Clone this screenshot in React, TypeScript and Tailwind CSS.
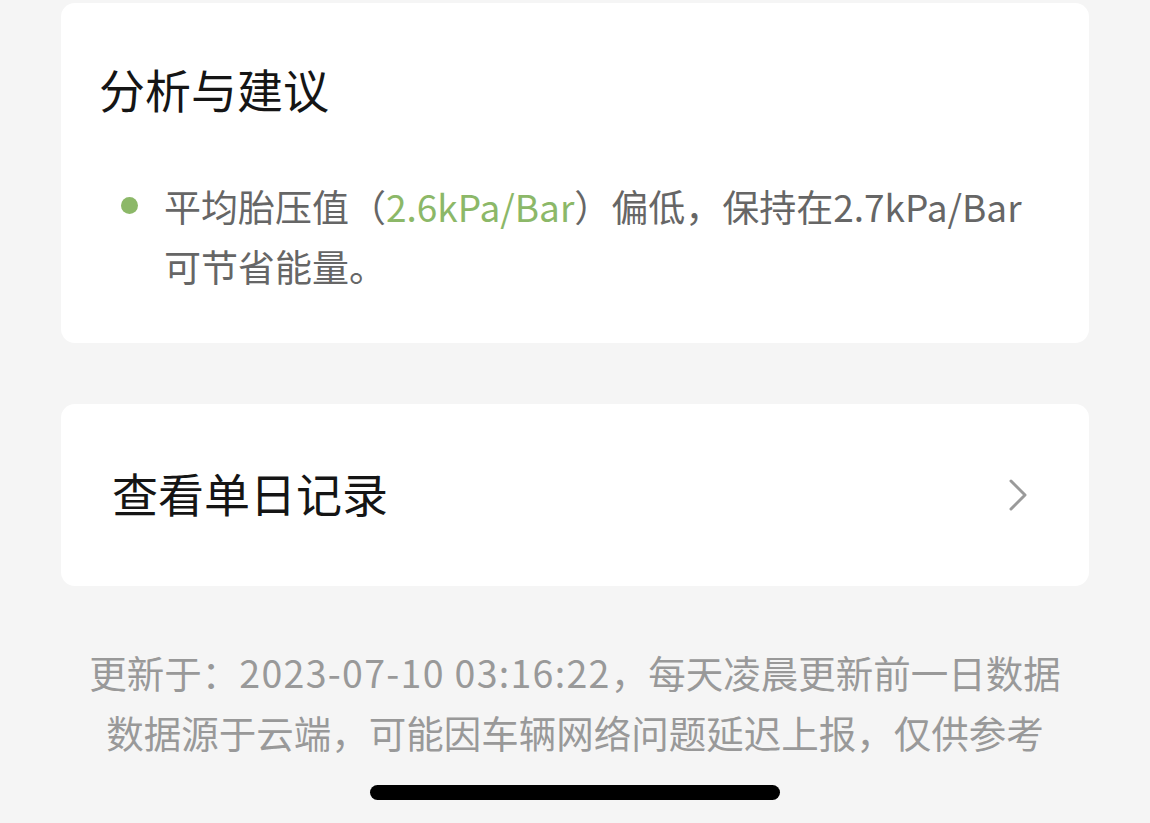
import React from 'react';

const App: React.FC = () => {
  return (
    <div
      className="w-[1150px] h-[823px] bg-[#f5f5f5] px-[61px] pt-[3px] overflow-hidden"
      style={{ fontFamily: '"Noto Sans CJK SC", "Noto Sans", sans-serif' }}
    >
      {/* analysis card */}
      <div className="bg-white rounded-[14px] pl-[38px] pr-[40px] pt-[53px] pb-[47px]">
        <h2 className="text-[46px] leading-[64px] text-[#151515] font-normal">分析与建议</h2>
        <div className="mt-[56px] flex items-start">
          <span className="mt-[21px] ml-[22px] w-[17px] h-[17px] rounded-full bg-[#8cb868] shrink-0"></span>
          <p className="ml-[26px] text-[37px] leading-[60px] text-[#666666]">
            平均胎压值（<span className="text-[#8cb868]">2.6kPa/Bar</span>）偏低，保持在2.7kPa/Bar
            <br />
            可节省能量。
          </p>
        </div>
      </div>

      {/* daily record link */}
      <div className="mt-[61px] bg-white rounded-[14px] h-[182px] pl-[51px] pr-[60px] pb-[6px] flex items-center justify-between">
        <span className="text-[46px] leading-[64px] text-[#151515]">查看单日记录</span>
        <svg width="22" height="34" viewBox="0 0 22 34" fill="none" className="mt-[6px]">
          <path d="M4 3 L18 17 L4 31" stroke="#9a9a9a" strokeWidth="3" strokeLinecap="round" strokeLinejoin="round" />
        </svg>
      </div>

      {/* footer note */}
      <div className="mt-[56px] text-center text-[37.5px] leading-[60px] text-[#999999]">
        <p>
          更新于：<span className="tracking-[1.3px]">2023-07-10 03:16:22</span>，每天凌晨更新前一日数据
        </p>
        <p>数据源于云端，可能因车辆网络问题延迟上报，仅供参考</p>
      </div>

      {/* home indicator */}
      <div className="mt-[23px] flex justify-center">
        <div className="w-[410px] h-[15px] rounded-full bg-black"></div>
      </div>
    </div>
  );
};

export default App;
